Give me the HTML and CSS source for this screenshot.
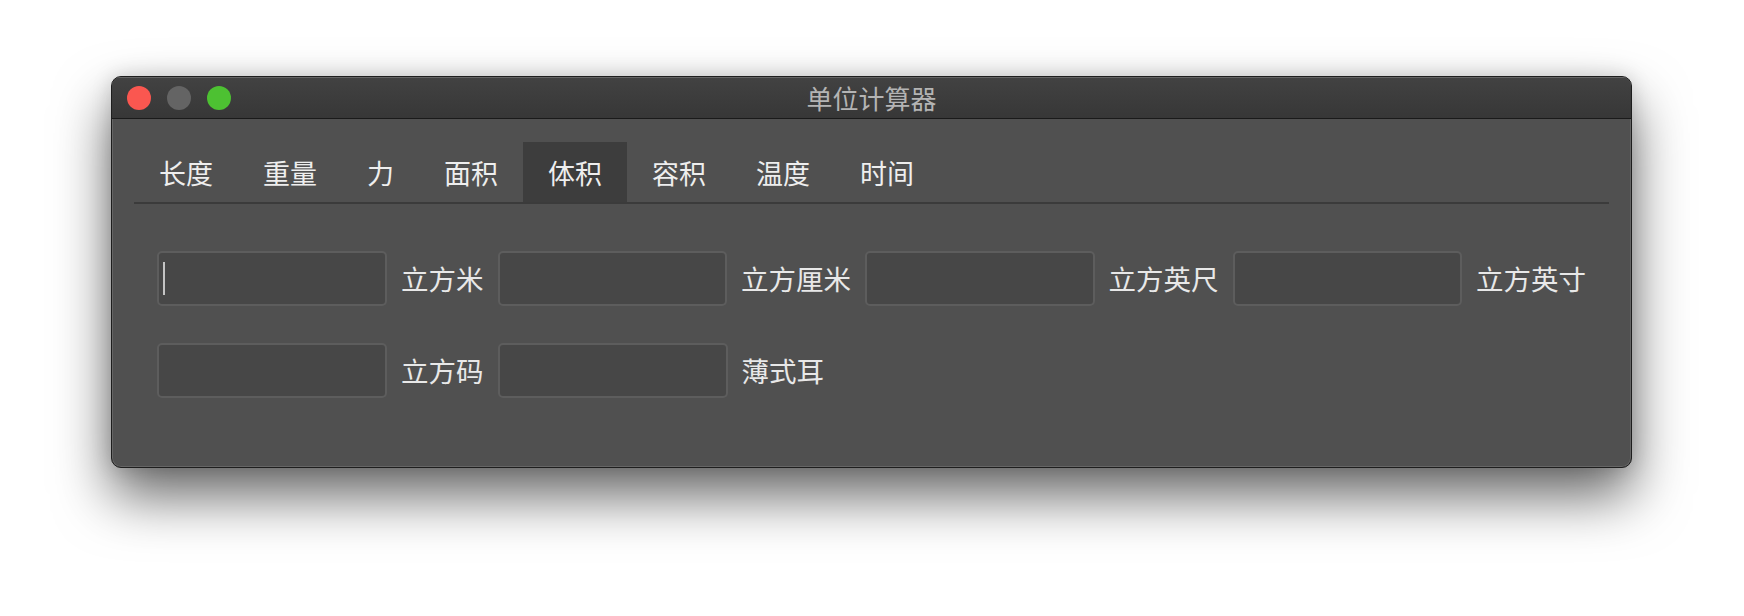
FILE: index.html
```html
<!DOCTYPE html>
<html lang="zh-CN">
<head>
    <meta charset="UTF-8">
    <meta name="viewport" content="width=device-width, initial-scale=1.0">
    <title>单位计算器</title>
    <link rel="stylesheet" href="styles.css">
</head>
<body>
    <div class="window">
        <div class="titlebar">
            <div class="lights">
                <span class="light red"></span>
                <span class="light grey"></span>
                <span class="light green"></span>
            </div>
            <div class="title">单位计算器</div>
            <div></div>
        </div>
        <div class="content">
            <div class="tabs">
                <div class="tab">长度</div>
                <div class="tab">重量</div>
                <div class="tab">力</div>
                <div class="tab">面积</div>
                <div class="tab active">体积</div>
                <div class="tab">容积</div>
                <div class="tab">温度</div>
                <div class="tab">时间</div>
            </div>
            <div class="form">
                <div class="row">
                    <div class="field-wrap">
                        <input class="field" type="text">
                        <span class="caret"></span>
                    </div>
                    <span class="unit">立方米</span>
                    <input class="field" type="text">
                    <span class="unit">立方厘米</span>
                    <input class="field" type="text">
                    <span class="unit">立方英尺</span>
                    <input class="field" type="text">
                    <span class="unit">立方英寸</span>
                </div>
                <div class="row">
                    <input class="field" type="text">
                    <span class="unit">立方码</span>
                    <input class="field" type="text">
                    <span class="unit">薄式耳</span>
                </div>
            </div>
        </div>
    </div>
</body>
</html>
```

FILE: styles.css
```css
* { box-sizing: border-box; }
html, body { height: 100%; }
body { margin: 0; padding-top: 76px; background: #ffffff; font-family: "Noto Sans CJK SC", "Noto Sans", sans-serif; overflow: hidden; }

.window { width: 1521px; height: 392px; margin-left: 111px; background: #505050; border: 1px solid #1e1e1e; border-radius: 10px; overflow: hidden; display: flex; flex-direction: column; box-shadow: inset 0 0 0 1px rgba(255, 255, 255, 0.12), 0 28px 55px rgba(0, 0, 0, 0.6), 0 0 20px rgba(0, 0, 0, 0.15); }

.titlebar { height: 42px; flex: none; display: grid; grid-template-columns: 1fr auto 1fr; align-items: center; padding: 0 15px; background: linear-gradient(#424242, #373737); border-bottom: 1px solid #1a1a1a; box-shadow: inset 0 1px 0 rgba(255, 255, 255, 0.18); }
.lights { display: flex; gap: 16px; }
.light { width: 24px; height: 24px; border-radius: 50%; }
.red { background: #fa5750; }
.grey { background: #646464; }
.green { background: #4dc132; }
.title { font-size: 26px; line-height: 1; color: #b4b4b4; }

.content { flex: 1; padding: 23px 22px 0; }
.tabs { display: flex; border-bottom: 2px solid #3b3b3b; }
.tab { height: 60px; padding: 0 25px; display: flex; align-items: center; font-size: 27px; color: #eeeeee; }
.tab.active { background: #3d3d3d; }

.form { padding: 47px 23px 0; display: flex; flex-direction: column; gap: 37px; }
.row { display: flex; align-items: center; gap: 14px; }
.field-wrap { position: relative; display: flex; }
.field { width: 230px; height: 55px; margin: 0; background: #474747; border: 2px solid #5d5d5d; border-radius: 5px; outline: none; color: #eeeeee; font: inherit; }
.caret { position: absolute; left: 6px; top: 11px; width: 2px; height: 33px; background: #c4c4c4; }
.unit { font-size: 27.5px; line-height: 1; color: #e8e8e8; white-space: nowrap; }
```
